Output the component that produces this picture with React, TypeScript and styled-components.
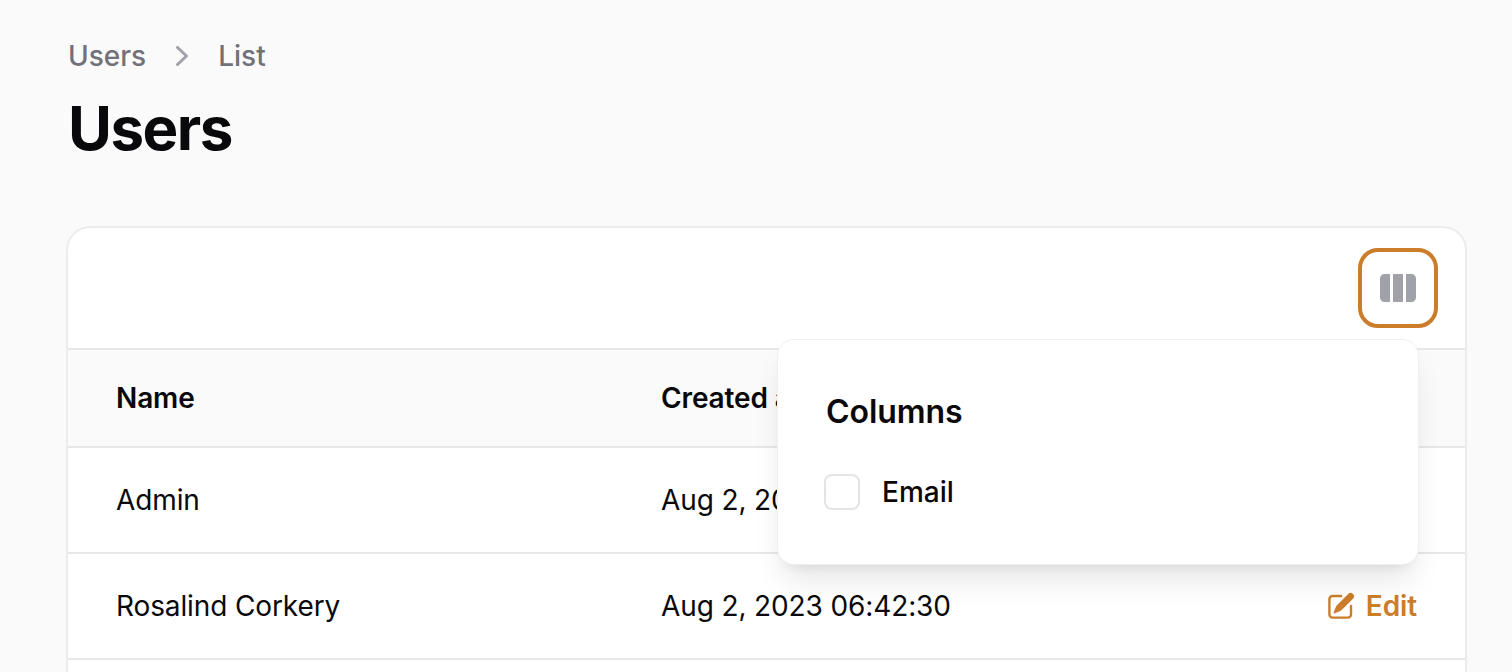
import styled, { createGlobalStyle } from "styled-components";

const accent = "#cb7d2b";

const GlobalStyle = createGlobalStyle`
  html, body {
    margin: 0;
    height: 672px;
    overflow: hidden;
    background: #fafafa;
  }
  body {
    font-family: Inter, "Liberation Sans", sans-serif;
    color: #09090b;
  }
`;

const Page = styled.main`
  box-sizing: border-box;
  height: 672px;
  overflow: hidden;
  padding: 36px 45px 0 66px;
`;

const Breadcrumbs = styled.nav`
  display: flex;
  align-items: center;
  height: 40px;
  margin-left: 2px;
  font-size: 28px;
  font-weight: 500;
  color: #71717a;
`;

const Crumb = styled.span`
  line-height: 40px;
`;

const Chevron = styled.svg`
  width: 40px;
  height: 40px;
  margin: 0 16px 0 16px;
  color: #a1a1aa;
`;

const Title = styled.h1`
  margin: 16px 0 0 2px;
  font-size: 60px;
  line-height: 72px;
  font-weight: 700;
  letter-spacing: -1.5px;
  color: #09090b;
`;

const Card = styled.section`
  min-height: 600px;
  margin-top: 62px;
  background: #fff;
  border: 2px solid #ececec;
  border-bottom: 0;
  border-radius: 24px 24px 0 0;
`;

const Toolbar = styled.div`
  position: relative;
  display: flex;
  justify-content: flex-end;
  padding: 20px 27px 20px 0;
  border-bottom: 2px solid #e7e7e7;
`;

const ColumnsButton = styled.button`
  display: flex;
  align-items: center;
  justify-content: center;
  width: 80px;
  height: 80px;
  padding: 0;
  background: #fff;
  border: 4px solid ${accent};
  border-radius: 20px;
  color: #a1a1aa;
`;

const Popover = styled.div`
  position: absolute;
  top: 111px;
  right: 46px;
  z-index: 2;
  box-sizing: border-box;
  width: 642px;
  height: 226px;
  padding: 50px 48px 0;
  background: #fff;
  border: 1px solid #f0f0f0;
  border-radius: 17px;
  box-shadow: 0 20px 30px -6px rgba(0, 0, 0, 0.1), 0 8px 12px -8px rgba(0, 0, 0, 0.1);
`;

const PopoverTitle = styled.h2`
  margin: 0;
  font-size: 32px;
  line-height: 44px;
  font-weight: 600;
  letter-spacing: -0.05px;
`;

const CheckRow = styled.label`
  display: flex;
  align-items: center;
  gap: 22px;
  margin: 38px 0 0 -2px;
  font-size: 28px;
  line-height: 40px;
  font-weight: 500;
`;

const CheckBox = styled.span`
  box-sizing: border-box;
  width: 36px;
  height: 36px;
  background: #fff;
  border: 2px solid #e4e4e4;
  border-radius: 8px;
`;

const Row = styled.div<{ $head?: boolean }>`
  display: grid;
  grid-template-columns: 545px 1fr auto;
  align-items: center;
  box-sizing: border-box;
  height: ${(p) => (p.$head ? "98px" : "106px")};
  padding: 0 48px;
  font-size: 28px;
  font-weight: ${(p) => (p.$head ? 600 : 400)};
  letter-spacing: -0.12px;
  background: ${(p) => (p.$head ? "#fafafa" : "#fff")};
  border-bottom: 2px solid #e7e7e7;
`;

const EditLink = styled.a`
  display: flex;
  align-items: center;
  gap: 9px;
  font-weight: 600;
  color: ${accent};
`;

const users = [
  { name: "Admin", created: "Aug 2, 2023 06:42:30" },
  { name: "Rosalind Corkery", created: "Aug 2, 2023 06:42:30" },
];

export default function App() {
  return (
    <>
      <GlobalStyle />
      <Page>
        <Breadcrumbs>
          <Crumb>Users</Crumb>
          <Chevron viewBox="0 0 20 20" fill="currentColor">
            <path
              fillRule="evenodd"
              clipRule="evenodd"
              d="M7.21 14.77a.75.75 0 01.02-1.06L11.168 10 7.23 6.29a.75.75 0 111.04-1.08l4.5 4.25a.75.75 0 010 1.08l-4.5 4.25a.75.75 0 01-1.06-.02z"
            />
          </Chevron>
          <Crumb>List</Crumb>
        </Breadcrumbs>
        <Title>Users</Title>
        <Card>
          <Toolbar>
            <ColumnsButton aria-label="Columns">
              <svg width="40" height="40" viewBox="0 0 20 20" fill="currentColor">
                <path d="M14 17h2.75A2.25 2.25 0 0019 14.75v-9.5A2.25 2.25 0 0016.75 3H14v14zM12.5 3h-5v14h5V3zM3.25 3H6v14H3.25A2.25 2.25 0 011 14.75v-9.5A2.25 2.25 0 013.25 3z" />
              </svg>
            </ColumnsButton>
            <Popover>
              <PopoverTitle>Columns</PopoverTitle>
              <CheckRow>
                <CheckBox />
                Email
              </CheckRow>
            </Popover>
          </Toolbar>
          <Row $head>
            <span>Name</span>
            <span>Created at</span>
            <span />
          </Row>
          {users.map((user) => (
            <Row key={user.name}>
              <span>{user.name}</span>
              <span>{user.created}</span>
              <EditLink>
                <svg width="32" height="32" viewBox="0 0 20 20" fill="currentColor">
                  <path d="M5.433 13.917l1.262-3.155A4 4 0 017.58 9.42l6.92-6.918a2.121 2.121 0 013 3l-6.92 6.918c-.383.383-.84.685-1.343.886l-3.154 1.262a.5.5 0 01-.65-.65z" />
                  <path d="M3.5 5.75c0-.69.56-1.25 1.25-1.25H10A.75.75 0 0010 3H4.75A2.75 2.75 0 002 5.75v9.5A2.75 2.75 0 004.75 18h9.5A2.75 2.75 0 0017 15.25V10a.75.75 0 00-1.5 0v5.25c0 .69-.56 1.25-1.25 1.25h-9.5c-.69 0-1.25-.56-1.25-1.25v-9.5z" />
                </svg>
                Edit
              </EditLink>
            </Row>
          ))}
        </Card>
      </Page>
    </>
  );
}
